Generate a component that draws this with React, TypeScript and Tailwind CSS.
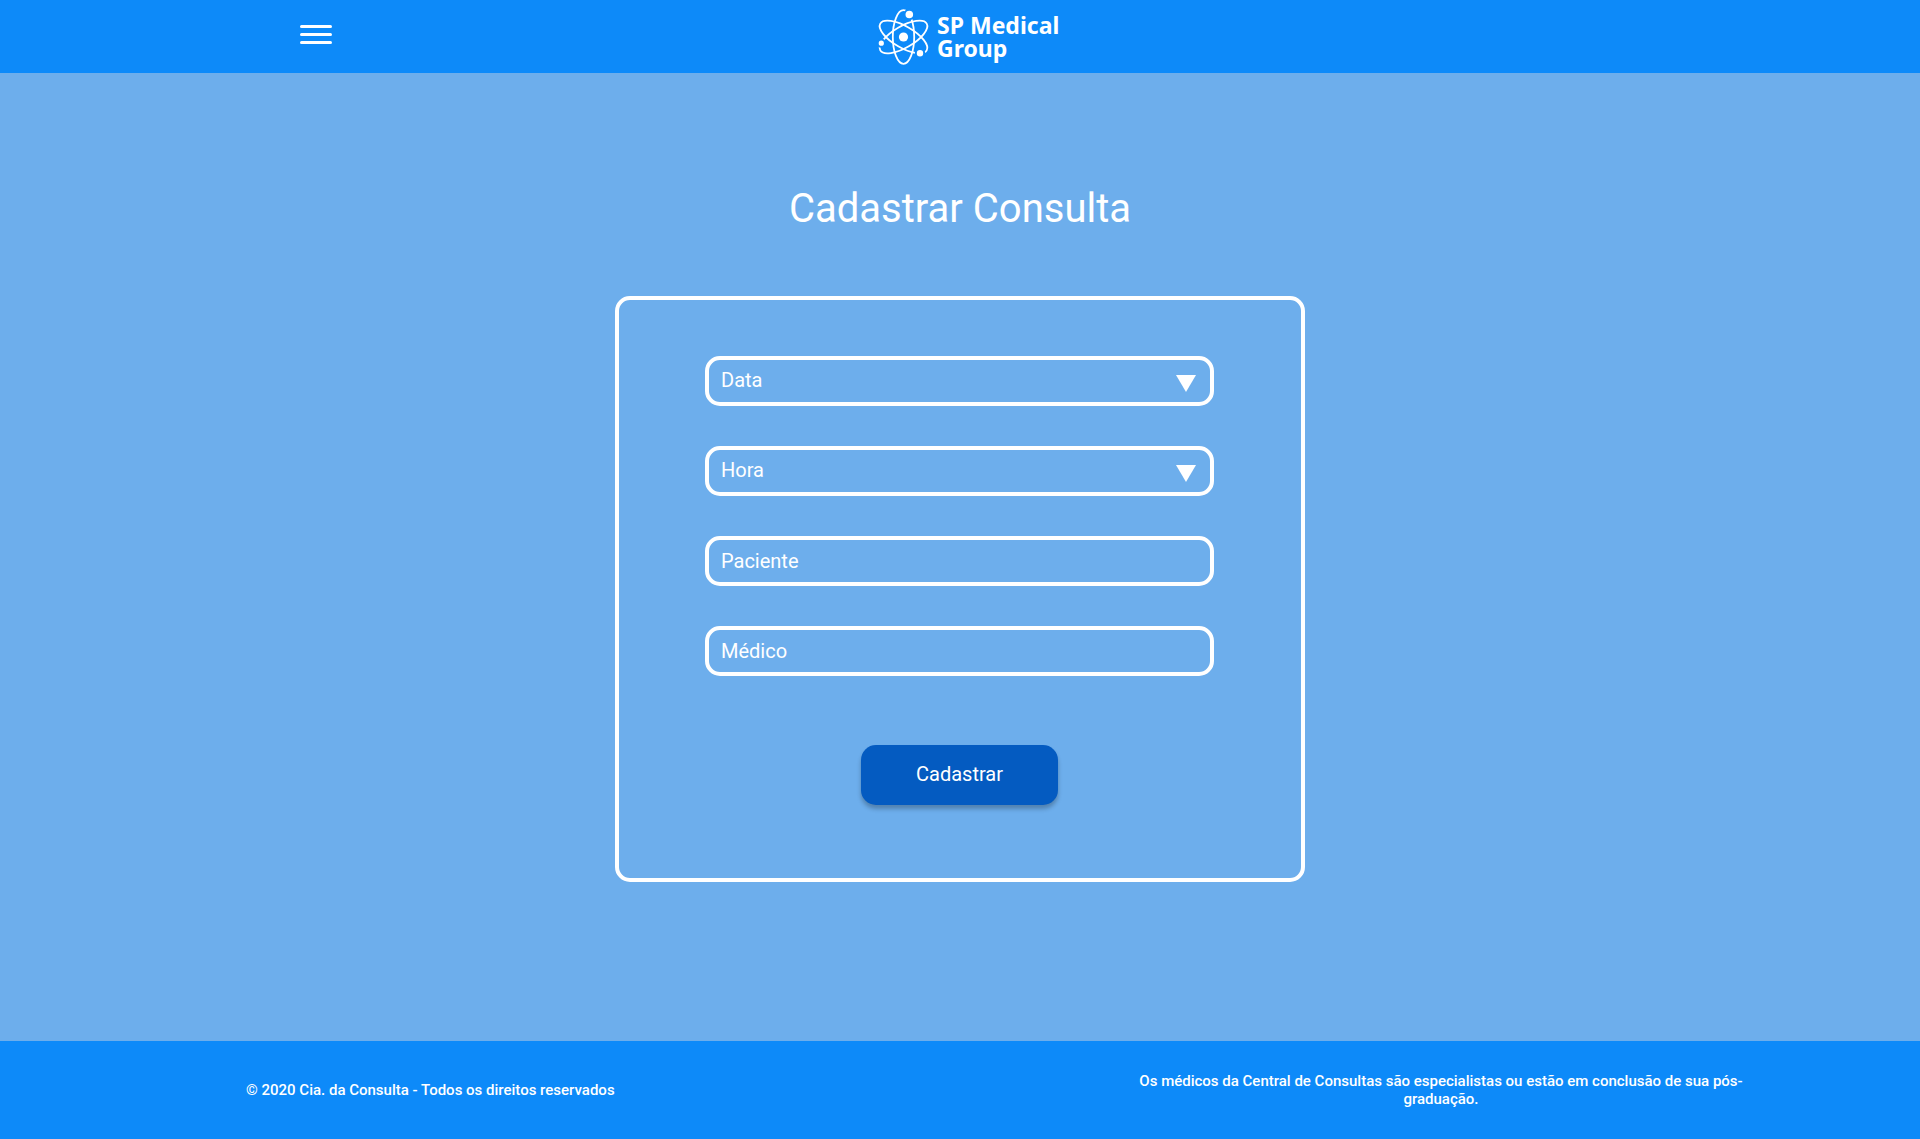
import React from "react";

function AtomIcon() {
  return (
    <svg viewBox="0 0 60 66" className="h-[66px] w-[60px]" fill="none" stroke="white" strokeWidth="1.8" aria-hidden="true">
      <ellipse cx="30.5" cy="33" rx="10.7" ry="26.8" />
      <ellipse cx="30.5" cy="33" rx="10.7" ry="26.8" transform="rotate(60 30.5 33)" />
      <ellipse cx="30.5" cy="33" rx="10.7" ry="26.8" transform="rotate(-60 30.5 33)" />
      <g fill="white" stroke="#0d8af9" strokeWidth="2">
        <circle cx="36.3" cy="10.5" r="4.8" />
        <circle cx="8.3" cy="39.2" r="3.6" />
        <circle cx="47" cy="49.3" r="4.2" />
      </g>
      <circle cx="30.5" cy="33" r="4.6" fill="white" stroke="none" />
    </svg>
  );
}

const fieldBox =
  "h-[50px] w-full appearance-none rounded-[15px] border-4 border-white bg-transparent px-3 text-xl text-white outline-none placeholder:text-white placeholder:opacity-100";

function SelectField({ name }: { name: string }) {
  return (
    <div className="relative">
      <select aria-label={name} className={`${fieldBox} pb-0.5`} defaultValue={name}>
        <option>{name}</option>
      </select>
      <svg viewBox="0 0 20 17" className="pointer-events-none absolute top-[19px] right-[18px] h-[17px] w-5" fill="white" aria-hidden="true">
        <path d="M0 0H20L10 17Z" />
      </svg>
    </div>
  );
}

function TextField({ name }: { name: string }) {
  return <input type="text" aria-label={name} placeholder={name} className={fieldBox} />;
}

export default function App() {
  return (
    <div className="flex min-h-screen flex-col bg-[#6daeec] font-[Roboto,sans-serif] text-white">
      <header className="grid h-[73px] grid-cols-[1fr_auto_1fr] items-center bg-[#0d8af9]">
        <button type="button" aria-label="Menu" className="ml-[300px] flex w-8 flex-col gap-[5px] justify-self-start pb-1">
          <span className="h-[3px] rounded-xs bg-white" />
          <span className="h-[3px] rounded-xs bg-white" />
          <span className="h-[3px] rounded-xs bg-white" />
        </button>
        <a href="#" className="ml-5 flex items-center gap-1">
          <AtomIcon />
          <span className="w-[130px] font-['Noto_Sans',sans-serif] text-[23px] leading-[23px] font-bold">
            SP Medical Group
          </span>
        </a>
      </header>

      <main className="flex flex-1 flex-col items-center">
        <h1 className="mt-28 text-[40px] leading-[47px]">Cadastrar Consulta</h1>
        <form className="mt-16 mb-16 flex w-[690px] max-w-full flex-col items-center rounded-[15px] border-4 border-white pt-14 pr-[87px] pb-[73px] pl-[86px]">
          <div className="flex w-full flex-col gap-10">
            <SelectField name="Data" />
            <SelectField name="Hora" />
            <TextField name="Paciente" />
            <TextField name="Médico" />
          </div>
          <button
            type="button"
            className="mt-[69px] h-[60px] w-[197px] rounded-[15px] bg-[#045bc1] pb-0.5 text-xl shadow-[0_4px_4px_rgba(0,0,0,0.25)]"
          >
            Cadastrar
          </button>
        </form>
      </main>

      <footer className="flex h-[98px] items-center justify-between bg-[#0d8af9] pr-[169px] pl-[246px] text-[15px] leading-[18px] font-medium">
        <p>© 2020 Cia. da Consulta - Todos os direitos reservados</p>
        <p className="w-[620px] text-center">
          Os médicos da Central de Consultas são especialistas ou estão em conclusão de sua pós-graduação.
        </p>
      </footer>
    </div>
  );
}
